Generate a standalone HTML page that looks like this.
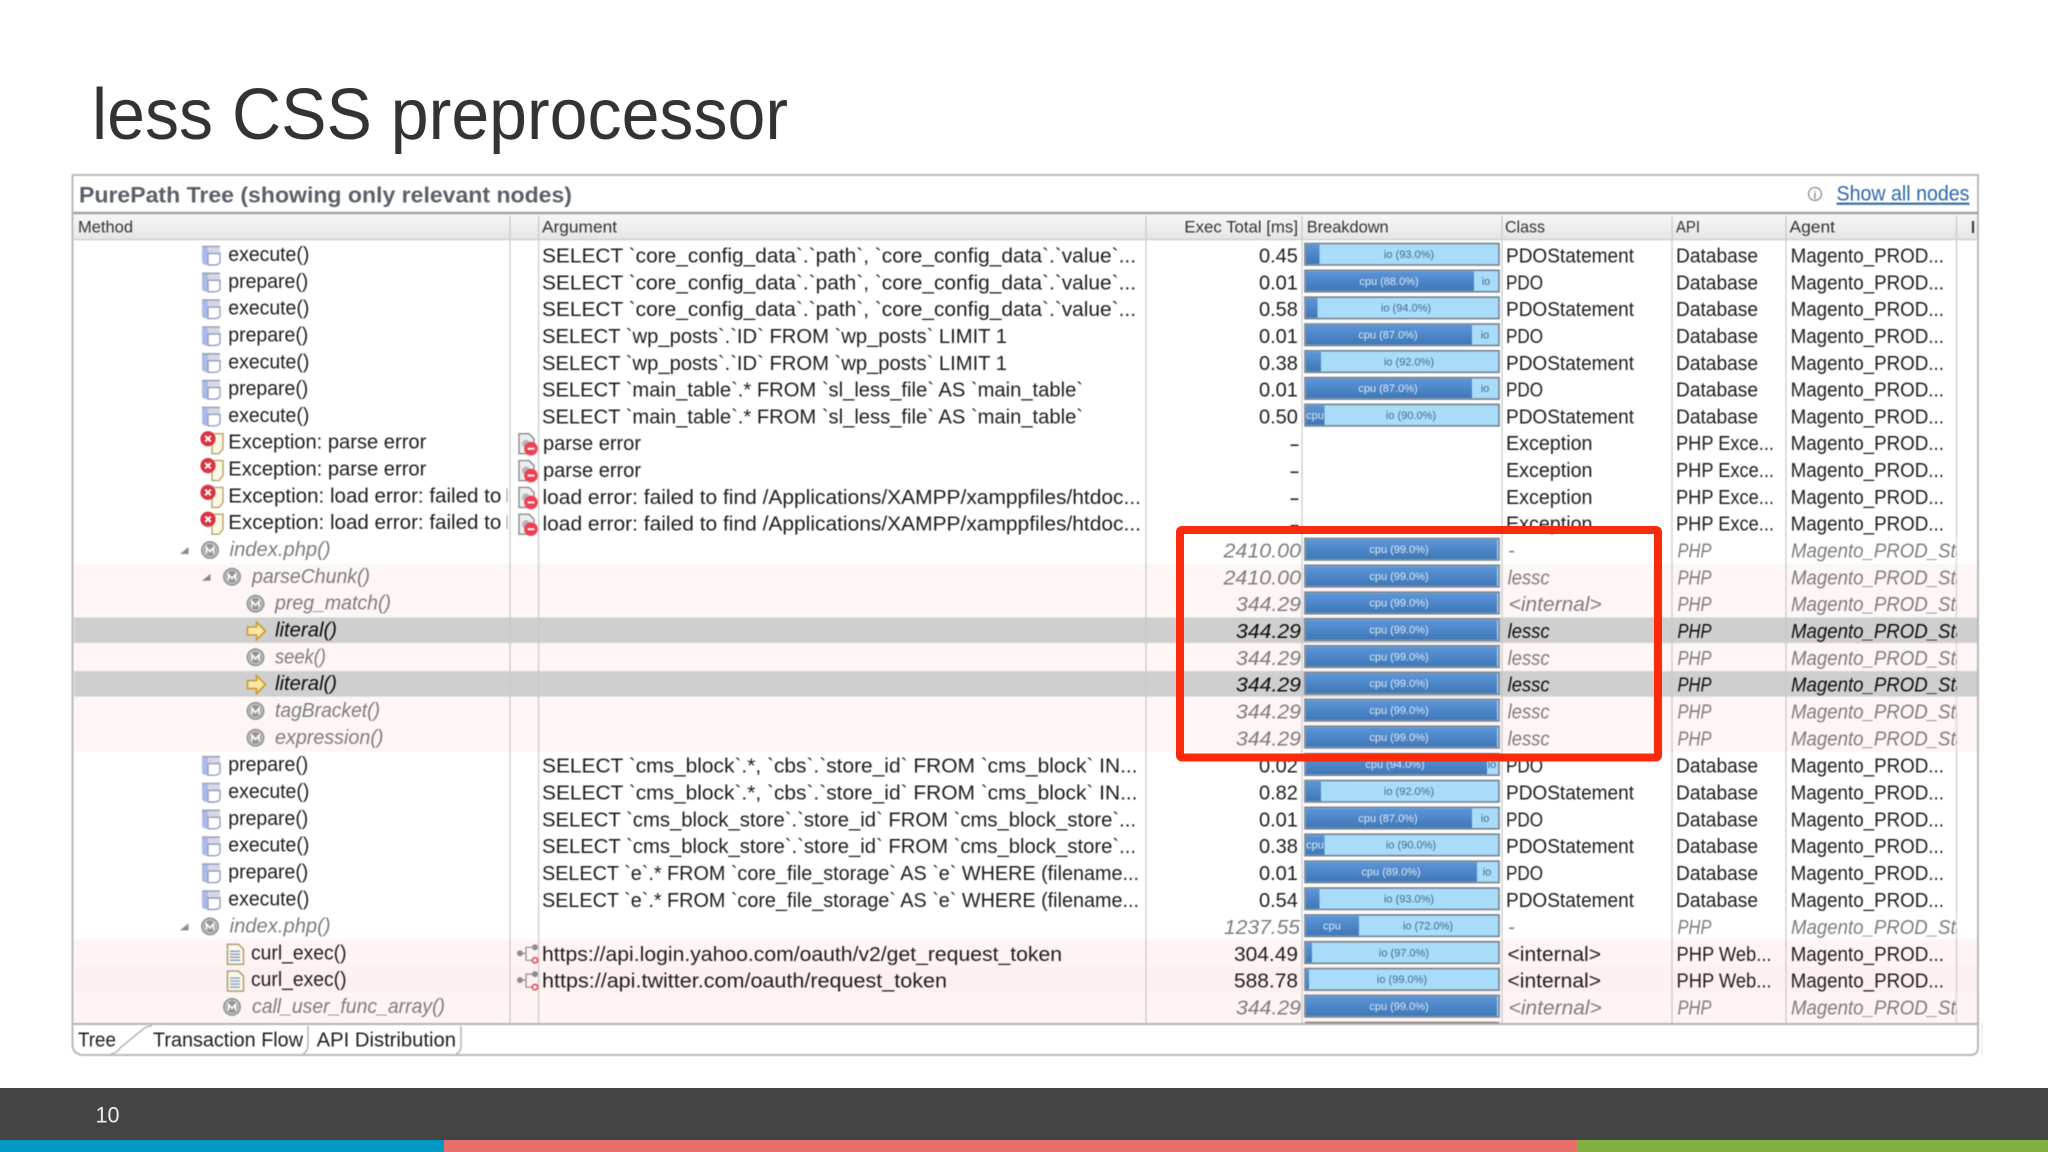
<!DOCTYPE html>
<html><head><meta charset="utf-8"><title>less CSS preprocessor</title>
<style>
html,body{margin:0;padding:0;background:#fff;width:2048px;height:1152px;overflow:hidden}
svg{display:block;position:absolute;left:0;top:0}
text{font-family:"Liberation Sans",sans-serif;font-size:20px;fill:#1c1c1c;white-space:pre}
.hd{font-size:17px;fill:#333}
.i{font-style:italic;fill:#7c7c7c}
.k{font-style:italic;fill:#0c0c0c}
.ld{font-size:11px;fill:#dbe9f8;text-anchor:middle}
.ll{font-size:11px;fill:#3f6c94;text-anchor:middle}
.bl{fill:#a9dcf8;stroke:#74818e;stroke-width:1.6}
.bd{fill:url(#dk)}
.tbl{filter:blur(.4px)}
</style></head><body>
<svg width="2048" height="1152" viewBox="0 0 2048 1152" xmlns="http://www.w3.org/2000/svg">
<defs>
<linearGradient id="dk" x1="0" y1="0" x2="0" y2="1"><stop offset="0" stop-color="#5c96da"/><stop offset="1" stop-color="#3f77b6"/></linearGradient>
<linearGradient id="hg" x1="0" y1="0" x2="0" y2="1"><stop offset="0" stop-color="#f7f7f7"/><stop offset="1" stop-color="#e6e6e6"/></linearGradient>
<g id="db"><path d="M202 4.500h6v18l-3 .5-3-2z" fill="#aeb9e8"/><path d="M208 4.500h12v7h-12z" fill="#d6d9e4"/><path d="M208 11.500h12v8.500q-1 3-6 3h-6z" fill="#fff" stroke="#8f9dc0" stroke-width="1.400"/><path d="M202 4.500h18" stroke="#98a3bd" stroke-width="1.600"/></g>
<g id="ex"><path d="M212 4h11v15l-4 5h-7z" fill="#fdf8e4" stroke="#b3a468" stroke-width="1.400"/><circle cx="208" cy="9" r="7.600" fill="#d9333f"/><path d="M205.200 6.200l5.600 5.600M210.800 6.200l-5.600 5.600" stroke="#fff" stroke-width="2"/></g>
<g id="ae"><path d="M519 4h10l5 5v15h-15z" fill="#eee" stroke="#8a8a8a" stroke-width="1.400"/><circle cx="526" cy="14" r="4" fill="#b5b5b5"/><circle cx="531" cy="19" r="6.800" fill="#ef3f55"/><path d="M527.500 19h7" stroke="#fff" stroke-width="2"/></g>
<g id="mi"><circle cx="0" cy="0" r="9" fill="#969696"/><circle cx="0" cy="0" r="6.600" fill="none" stroke="#d4d4d4" stroke-width="1"/><path d="M-3.600 3.500v-6l3.600 4 3.600-4v6" fill="none" stroke="#fff" stroke-width="1.700"/></g>
<g id="ar"><path d="M247.500 9.500h9v-5l9 9-9 9v-5h-9z" fill="#fbe6a6" stroke="#c79a2e" stroke-width="1.600"/></g>
<g id="fi"><path d="M227.500 4h11l5 5v15h-16z" fill="#fbf6e8" stroke="#a5996c" stroke-width="1.400"/><path d="M230 11h10M230 14h10M230 17h10M230 20h10" stroke="#7e9ac8" stroke-width="1.300"/></g>
<g id="ln"><path d="M520 13h6M526 13v-6h9M526 13v7h6" fill="none" stroke="#8f8f8f" stroke-width="1.200"/><circle cx="520" cy="13" r="3" fill="#8d8d8d"/><circle cx="535" cy="7" r="3" fill="#8d8d8d"/><circle cx="535" cy="20" r="2.600" fill="#fff" stroke="#e04a5c" stroke-width="1.700"/></g>
</defs>

<text x="92" y="139" style="font-size:72px;fill:#333" textLength="696" lengthAdjust="spacingAndGlyphs">less CSS preprocessor</text>

<g class="tbl">
<!-- row backgrounds -->
<rect x="74" y="563.800" width="1904" height="187.800" fill="#fef5f5"/>
<rect x="74" y="939.300" width="1904" height="84" fill="#fef4f4"/>
<rect x="74" y="966.100" width="1904" height="26.800" fill="#fdf0f0"/>
<rect x="74" y="617.500" width="1904" height="25.500" fill="#cfcfcf"/>
<rect x="74" y="671.100" width="1904" height="25.500" fill="#cfcfcf"/>

<!-- panel -->
<rect x="74" y="214" width="1904" height="25" fill="url(#hg)"/>
<path d="M72.500 1044V175H1978V1047q0 8-8 8H84q-11.500 0-11.500-11" fill="none" stroke="#b9b9b9" stroke-width="2"/>
<path d="M73 213H1978" stroke="#a3a3a3" stroke-width="2.600"/>
<path d="M73 239.500H1978" stroke="#cfcfcf" stroke-width="1.600"/>
<path d="M73 1024H1978" stroke="#b4b4b4" stroke-width="2"/>
<path d="M1305 1022.500H1499" stroke="#8a7f7f" stroke-width="1.500"/>
<path d="M1982 1022V1057" stroke="#e3e3e3" stroke-width="1"/>
<path d="M510 216V1023M538.600 216V1023M1146 216V1023M1302 216V1023M1502 216V1023M1672 216V1023M1786 216V1023M1956.500 216V1023" stroke="#c8c8c8" stroke-width="1.200" fill="none"/>
<path d="M111 1054q6-1 9-6l22-18q4-4 10-4M308 1026v20q-1 6-5 8M461 1026v20q0 6-5 8" fill="none" stroke="#b4b4b4" stroke-width="1.500"/>

<!-- title bar -->
<text x="79" y="202.700" style="font-size:22px;font-weight:bold;fill:#5a6068" textLength="493" lengthAdjust="spacingAndGlyphs">PurePath Tree (showing only relevant nodes)</text>
<circle cx="1815" cy="194" r="6.500" fill="#fff" stroke="#8b8b8b" stroke-width="1.300"/>
<text x="1813.500" y="199" style="font-size:12px;fill:#666">i</text>
<text x="1836.500" y="200.700" style="font-size:21px;fill:#2b66ab;text-decoration:underline" textLength="133" lengthAdjust="spacingAndGlyphs">Show all nodes</text>

<!-- header -->
<text class="hd" x="78" y="232.700" textLength="55" lengthAdjust="spacingAndGlyphs">Method</text>
<text class="hd" x="542" y="232.700" textLength="75" lengthAdjust="spacingAndGlyphs">Argument</text>
<text class="hd" x="1184.400" y="232.700" textLength="113.600" lengthAdjust="spacingAndGlyphs">Exec Total [ms]</text>
<text class="hd" x="1306.700" y="232.700" textLength="82" lengthAdjust="spacingAndGlyphs">Breakdown</text>
<text class="hd" x="1505" y="232.700" textLength="40" lengthAdjust="spacingAndGlyphs">Class</text>
<text class="hd" x="1676" y="232.700" textLength="24" lengthAdjust="spacingAndGlyphs">API</text>
<text class="hd" x="1789.500" y="232.700" textLength="45.500" lengthAdjust="spacingAndGlyphs">Agent</text>
<rect x="1972" y="221" width="2" height="12" fill="#333"/>

<!-- row 0 -->
<g transform="translate(0,242)"><use href="#db"/><text x="228.300" y="19" textLength="81" lengthAdjust="spacingAndGlyphs">execute()</text>
<text x="542" y="20.500" textLength="594" lengthAdjust="spacingAndGlyphs">SELECT `core_config_data`.`path`, `core_config_data`.`value`...</text>
<text x="1259" y="20.500">0.45</text>
<rect class="bl" x="1305" y="1.500" width="194" height="21.500"/><rect class="bd" x="1306" y="2.500" width="13.500" height="19.500"/><text class="ll" x="1409" y="16">io (93.0%)</text>
<text x="1506" y="20.500" textLength="128" lengthAdjust="spacingAndGlyphs">PDOStatement</text><text x="1676" y="20.500" textLength="82" lengthAdjust="spacingAndGlyphs">Database</text><text x="1790.600" y="20.500" textLength="153.400" lengthAdjust="spacingAndGlyphs">Magento_PROD...</text></g>
<!-- row 1 -->
<g transform="translate(0,268.800)"><use href="#db"/><text x="228.300" y="19" textLength="80" lengthAdjust="spacingAndGlyphs">prepare()</text>
<text x="542" y="20.500" textLength="594" lengthAdjust="spacingAndGlyphs">SELECT `core_config_data`.`path`, `core_config_data`.`value`...</text>
<text x="1259" y="20.500">0.01</text>
<rect class="bl" x="1305" y="1.500" width="194" height="21.500"/><rect class="bd" x="1306" y="2.500" width="168" height="19.500"/><text class="ld" x="1389" y="16">cpu (88.0%)</text><text class="ll" x="1486" y="16">io</text>
<text x="1506" y="20.500" textLength="37" lengthAdjust="spacingAndGlyphs">PDO</text><text x="1676" y="20.500" textLength="82" lengthAdjust="spacingAndGlyphs">Database</text><text x="1790.600" y="20.500" textLength="153.400" lengthAdjust="spacingAndGlyphs">Magento_PROD...</text></g>
<!-- row 2 -->
<g transform="translate(0,295.600)"><use href="#db"/><text x="228.300" y="19" textLength="81" lengthAdjust="spacingAndGlyphs">execute()</text>
<text x="542" y="20.500" textLength="594" lengthAdjust="spacingAndGlyphs">SELECT `core_config_data`.`path`, `core_config_data`.`value`...</text>
<text x="1259" y="20.500">0.58</text>
<rect class="bl" x="1305" y="1.500" width="194" height="21.500"/><rect class="bd" x="1306" y="2.500" width="11.500" height="19.500"/><text class="ll" x="1406" y="16">io (94.0%)</text>
<text x="1506" y="20.500" textLength="128" lengthAdjust="spacingAndGlyphs">PDOStatement</text><text x="1676" y="20.500" textLength="82" lengthAdjust="spacingAndGlyphs">Database</text><text x="1790.600" y="20.500" textLength="153.400" lengthAdjust="spacingAndGlyphs">Magento_PROD...</text></g>
<!-- row 3 -->
<g transform="translate(0,322.500)"><use href="#db"/><text x="228.300" y="19" textLength="80" lengthAdjust="spacingAndGlyphs">prepare()</text>
<text x="542" y="20.500" textLength="465" lengthAdjust="spacingAndGlyphs">SELECT `wp_posts`.`ID` FROM `wp_posts` LIMIT 1</text>
<text x="1259" y="20.500">0.01</text>
<rect class="bl" x="1305" y="1.500" width="194" height="21.500"/><rect class="bd" x="1306" y="2.500" width="166" height="19.500"/><text class="ld" x="1388" y="16">cpu (87.0%)</text><text class="ll" x="1485" y="16">io</text>
<text x="1506" y="20.500" textLength="37" lengthAdjust="spacingAndGlyphs">PDO</text><text x="1676" y="20.500" textLength="82" lengthAdjust="spacingAndGlyphs">Database</text><text x="1790.600" y="20.500" textLength="153.400" lengthAdjust="spacingAndGlyphs">Magento_PROD...</text></g>
<!-- row 4 -->
<g transform="translate(0,349.300)"><use href="#db"/><text x="228.300" y="19" textLength="81" lengthAdjust="spacingAndGlyphs">execute()</text>
<text x="542" y="20.500" textLength="465" lengthAdjust="spacingAndGlyphs">SELECT `wp_posts`.`ID` FROM `wp_posts` LIMIT 1</text>
<text x="1259" y="20.500">0.38</text>
<rect class="bl" x="1305" y="1.500" width="194" height="21.500"/><rect class="bd" x="1306" y="2.500" width="15" height="19.500"/><text class="ll" x="1409" y="16">io (92.0%)</text>
<text x="1506" y="20.500" textLength="128" lengthAdjust="spacingAndGlyphs">PDOStatement</text><text x="1676" y="20.500" textLength="82" lengthAdjust="spacingAndGlyphs">Database</text><text x="1790.600" y="20.500" textLength="153.400" lengthAdjust="spacingAndGlyphs">Magento_PROD...</text></g>
<!-- row 5 -->
<g transform="translate(0,376.100)"><use href="#db"/><text x="228.300" y="19" textLength="80" lengthAdjust="spacingAndGlyphs">prepare()</text>
<text x="542" y="20.500" textLength="541" lengthAdjust="spacingAndGlyphs">SELECT `main_table`.* FROM `sl_less_file` AS `main_table`</text>
<text x="1259" y="20.500">0.01</text>
<rect class="bl" x="1305" y="1.500" width="194" height="21.500"/><rect class="bd" x="1306" y="2.500" width="166" height="19.500"/><text class="ld" x="1388" y="16">cpu (87.0%)</text><text class="ll" x="1485" y="16">io</text>
<text x="1506" y="20.500" textLength="37" lengthAdjust="spacingAndGlyphs">PDO</text><text x="1676" y="20.500" textLength="82" lengthAdjust="spacingAndGlyphs">Database</text><text x="1790.600" y="20.500" textLength="153.400" lengthAdjust="spacingAndGlyphs">Magento_PROD...</text></g>
<!-- row 6 -->
<g transform="translate(0,402.900)"><use href="#db"/><text x="228.300" y="19" textLength="81" lengthAdjust="spacingAndGlyphs">execute()</text>
<text x="542" y="20.500" textLength="541" lengthAdjust="spacingAndGlyphs">SELECT `main_table`.* FROM `sl_less_file` AS `main_table`</text>
<text x="1259" y="20.500">0.50</text>
<rect class="bl" x="1305" y="1.500" width="194" height="21.500"/><rect class="bd" x="1306" y="2.500" width="18.500" height="19.500"/><text class="ld" x="1315" y="16">cpu</text><text class="ll" x="1411" y="16">io (90.0%)</text>
<text x="1506" y="20.500" textLength="128" lengthAdjust="spacingAndGlyphs">PDOStatement</text><text x="1676" y="20.500" textLength="82" lengthAdjust="spacingAndGlyphs">Database</text><text x="1790.600" y="20.500" textLength="153.400" lengthAdjust="spacingAndGlyphs">Magento_PROD...</text></g>
<!-- row 7 -->
<g transform="translate(0,429.700)"><use href="#ex"/><text x="228.300" y="19" textLength="198" lengthAdjust="spacingAndGlyphs">Exception: parse error</text><use href="#ae"/>
<text x="543" y="20.500" textLength="98" lengthAdjust="spacingAndGlyphs">parse error</text>
<text x="1290" y="20" style="font-size:16px;font-weight:bold">–</text>
<text x="1506" y="20.500" textLength="86.500" lengthAdjust="spacingAndGlyphs">Exception</text><text x="1676" y="20.500" textLength="98" lengthAdjust="spacingAndGlyphs">PHP Exce...</text><text x="1790.600" y="20.500" textLength="153.400" lengthAdjust="spacingAndGlyphs">Magento_PROD...</text></g>
<!-- row 8 -->
<g transform="translate(0,456.600)"><use href="#ex"/><text x="228.300" y="19" textLength="198" lengthAdjust="spacingAndGlyphs">Exception: parse error</text><use href="#ae"/>
<text x="543" y="20.500" textLength="98" lengthAdjust="spacingAndGlyphs">parse error</text>
<text x="1290" y="20" style="font-size:16px;font-weight:bold">–</text>
<text x="1506" y="20.500" textLength="86.500" lengthAdjust="spacingAndGlyphs">Exception</text><text x="1676" y="20.500" textLength="98" lengthAdjust="spacingAndGlyphs">PHP Exce...</text><text x="1790.600" y="20.500" textLength="153.400" lengthAdjust="spacingAndGlyphs">Magento_PROD...</text></g>
<!-- row 9 -->
<g transform="translate(0,483.400)"><use href="#ex"/><text x="228.300" y="19" textLength="273" lengthAdjust="spacingAndGlyphs">Exception: load error: failed to</text><path d="M507 5v14" stroke="#999" stroke-width="1"/><use href="#ae"/>
<text x="542.500" y="20.500" textLength="598.500" lengthAdjust="spacingAndGlyphs">load error: failed to find /Applications/XAMPP/xamppfiles/htdoc...</text>
<text x="1290" y="20" style="font-size:16px;font-weight:bold">–</text>
<text x="1506" y="20.500" textLength="86.500" lengthAdjust="spacingAndGlyphs">Exception</text><text x="1676" y="20.500" textLength="98" lengthAdjust="spacingAndGlyphs">PHP Exce...</text><text x="1790.600" y="20.500" textLength="153.400" lengthAdjust="spacingAndGlyphs">Magento_PROD...</text></g>
<!-- row 10 -->
<g transform="translate(0,510.200)"><use href="#ex"/><text x="228.300" y="19" textLength="273" lengthAdjust="spacingAndGlyphs">Exception: load error: failed to</text><path d="M507 5v14" stroke="#999" stroke-width="1"/><use href="#ae"/>
<text x="542.500" y="20.500" textLength="598.500" lengthAdjust="spacingAndGlyphs">load error: failed to find /Applications/XAMPP/xamppfiles/htdoc...</text>
<text x="1290" y="20" style="font-size:16px;font-weight:bold">–</text>
<text x="1506" y="20.500" textLength="86.500" lengthAdjust="spacingAndGlyphs">Exception</text><text x="1676" y="20.500" textLength="98" lengthAdjust="spacingAndGlyphs">PHP Exce...</text><text x="1790.600" y="20.500" textLength="153.400" lengthAdjust="spacingAndGlyphs">Magento_PROD...</text></g>
<!-- row 11 -->
<g transform="translate(0,537)"><path d="M180 17l8.500-7v7z" fill="#8a8a8a"/><use href="#mi" x="210" y="13"/><text class="i" x="229.600" y="19" textLength="101" lengthAdjust="spacingAndGlyphs">index.php()</text>
<text class="i" x="1223.500" y="20.500" textLength="77.500" lengthAdjust="spacingAndGlyphs">2410.00</text>
<rect class="bl" x="1305" y="1.500" width="194" height="21.500"/><rect class="bd" x="1306" y="2.500" width="191" height="19.500"/><text class="ld" x="1399" y="16">cpu (99.0%)</text>
<text class="i" x="1508" y="20">-</text><text class="i" x="1677.500" y="20.500" textLength="34" lengthAdjust="spacingAndGlyphs">PHP</text><text class="i" x="1791" y="20.500" textLength="175" lengthAdjust="spacingAndGlyphs">Magento_PROD_Sta</text></g>
<!-- row 12 -->
<g transform="translate(0,563.800)"><path d="M202 17l8.500-7v7z" fill="#8a8a8a"/><use href="#mi" x="232" y="13"/><text class="i" x="252" y="19" textLength="118" lengthAdjust="spacingAndGlyphs">parseChunk()</text>
<text class="i" x="1223.500" y="20.500" textLength="77.500" lengthAdjust="spacingAndGlyphs">2410.00</text>
<rect class="bl" x="1305" y="1.500" width="194" height="21.500"/><rect class="bd" x="1306" y="2.500" width="191" height="19.500"/><text class="ld" x="1399" y="16">cpu (99.0%)</text>
<text class="i" x="1507.600" y="20.500" textLength="42" lengthAdjust="spacingAndGlyphs">lessc</text><text class="i" x="1677.500" y="20.500" textLength="34" lengthAdjust="spacingAndGlyphs">PHP</text><text class="i" x="1791" y="20.500" textLength="175" lengthAdjust="spacingAndGlyphs">Magento_PROD_Sta</text></g>
<!-- row 13 -->
<g transform="translate(0,590.700)"><use href="#mi" x="255.500" y="13"/><text class="i" x="275" y="19" textLength="116" lengthAdjust="spacingAndGlyphs">preg_match()</text>
<text class="i" x="1236" y="20.500" textLength="65" lengthAdjust="spacingAndGlyphs">344.29</text>
<rect class="bl" x="1305" y="1.500" width="194" height="21.500"/><rect class="bd" x="1306" y="2.500" width="191" height="19.500"/><text class="ld" x="1399" y="16">cpu (99.0%)</text>
<text class="i" x="1508.700" y="20.500" textLength="93" lengthAdjust="spacingAndGlyphs">&lt;internal&gt;</text><text class="i" x="1677.500" y="20.500" textLength="34" lengthAdjust="spacingAndGlyphs">PHP</text><text class="i" x="1791" y="20.500" textLength="175" lengthAdjust="spacingAndGlyphs">Magento_PROD_Sta</text></g>
<!-- row 14 -->
<g transform="translate(0,617.500)"><use href="#ar"/><text class="k" x="275" y="19" textLength="62" lengthAdjust="spacingAndGlyphs">literal()</text>
<text class="k" x="1236" y="20.500" textLength="65" lengthAdjust="spacingAndGlyphs">344.29</text>
<rect class="bl" x="1305" y="1.500" width="194" height="21.500"/><rect class="bd" x="1306" y="2.500" width="191" height="19.500"/><text class="ld" x="1399" y="16">cpu (99.0%)</text>
<text class="k" x="1507.600" y="20.500" textLength="42" lengthAdjust="spacingAndGlyphs">lessc</text><text class="k" x="1677.500" y="20.500" textLength="34" lengthAdjust="spacingAndGlyphs">PHP</text><text class="k" x="1791" y="20.500" textLength="175" lengthAdjust="spacingAndGlyphs">Magento_PROD_Sta</text></g>
<!-- row 15 -->
<g transform="translate(0,644.300)"><use href="#mi" x="255.500" y="13"/><text class="i" x="275" y="19" textLength="51" lengthAdjust="spacingAndGlyphs">seek()</text>
<text class="i" x="1236" y="20.500" textLength="65" lengthAdjust="spacingAndGlyphs">344.29</text>
<rect class="bl" x="1305" y="1.500" width="194" height="21.500"/><rect class="bd" x="1306" y="2.500" width="191" height="19.500"/><text class="ld" x="1399" y="16">cpu (99.0%)</text>
<text class="i" x="1507.600" y="20.500" textLength="42" lengthAdjust="spacingAndGlyphs">lessc</text><text class="i" x="1677.500" y="20.500" textLength="34" lengthAdjust="spacingAndGlyphs">PHP</text><text class="i" x="1791" y="20.500" textLength="175" lengthAdjust="spacingAndGlyphs">Magento_PROD_Sta</text></g>
<!-- row 16 -->
<g transform="translate(0,671.100)"><use href="#ar"/><text class="k" x="275" y="19" textLength="62" lengthAdjust="spacingAndGlyphs">literal()</text>
<text class="k" x="1236" y="20.500" textLength="65" lengthAdjust="spacingAndGlyphs">344.29</text>
<rect class="bl" x="1305" y="1.500" width="194" height="21.500"/><rect class="bd" x="1306" y="2.500" width="191" height="19.500"/><text class="ld" x="1399" y="16">cpu (99.0%)</text>
<text class="k" x="1507.600" y="20.500" textLength="42" lengthAdjust="spacingAndGlyphs">lessc</text><text class="k" x="1677.500" y="20.500" textLength="34" lengthAdjust="spacingAndGlyphs">PHP</text><text class="k" x="1791" y="20.500" textLength="175" lengthAdjust="spacingAndGlyphs">Magento_PROD_Sta</text></g>
<!-- row 17 -->
<g transform="translate(0,697.900)"><use href="#mi" x="255.500" y="13"/><text class="i" x="275" y="19" textLength="105" lengthAdjust="spacingAndGlyphs">tagBracket()</text>
<text class="i" x="1236" y="20.500" textLength="65" lengthAdjust="spacingAndGlyphs">344.29</text>
<rect class="bl" x="1305" y="1.500" width="194" height="21.500"/><rect class="bd" x="1306" y="2.500" width="191" height="19.500"/><text class="ld" x="1399" y="16">cpu (99.0%)</text>
<text class="i" x="1507.600" y="20.500" textLength="42" lengthAdjust="spacingAndGlyphs">lessc</text><text class="i" x="1677.500" y="20.500" textLength="34" lengthAdjust="spacingAndGlyphs">PHP</text><text class="i" x="1791" y="20.500" textLength="175" lengthAdjust="spacingAndGlyphs">Magento_PROD_Sta</text></g>
<!-- row 18 -->
<g transform="translate(0,724.800)"><use href="#mi" x="255.500" y="13"/><text class="i" x="275" y="19" textLength="108.500" lengthAdjust="spacingAndGlyphs">expression()</text>
<text class="i" x="1236" y="20.500" textLength="65" lengthAdjust="spacingAndGlyphs">344.29</text>
<rect class="bl" x="1305" y="1.500" width="194" height="21.500"/><rect class="bd" x="1306" y="2.500" width="191" height="19.500"/><text class="ld" x="1399" y="16">cpu (99.0%)</text>
<text class="i" x="1507.600" y="20.500" textLength="42" lengthAdjust="spacingAndGlyphs">lessc</text><text class="i" x="1677.500" y="20.500" textLength="34" lengthAdjust="spacingAndGlyphs">PHP</text><text class="i" x="1791" y="20.500" textLength="175" lengthAdjust="spacingAndGlyphs">Magento_PROD_Sta</text></g>
<!-- row 19 -->
<g transform="translate(0,752.200)"><use href="#db"/><text x="228.300" y="19" textLength="80" lengthAdjust="spacingAndGlyphs">prepare()</text>
<text x="542" y="20.500" textLength="595.500" lengthAdjust="spacingAndGlyphs">SELECT `cms_block`.*, `cbs`.`store_id` FROM `cms_block` IN...</text>
<text x="1259" y="20.500">0.02</text>
<rect class="bl" x="1305" y="1.500" width="194" height="21.500"/><rect class="bd" x="1306" y="2.500" width="181" height="19.500"/><text class="ld" x="1395" y="16">cpu (94.0%)</text><text class="ll" x="1492" y="16">io</text>
<text x="1506" y="20.500" textLength="37" lengthAdjust="spacingAndGlyphs">PDO</text><text x="1676" y="20.500" textLength="82" lengthAdjust="spacingAndGlyphs">Database</text><text x="1790.600" y="20.500" textLength="153.400" lengthAdjust="spacingAndGlyphs">Magento_PROD...</text></g>
<!-- row 20 -->
<g transform="translate(0,779)"><use href="#db"/><text x="228.300" y="19" textLength="81" lengthAdjust="spacingAndGlyphs">execute()</text>
<text x="542" y="20.500" textLength="595.500" lengthAdjust="spacingAndGlyphs">SELECT `cms_block`.*, `cbs`.`store_id` FROM `cms_block` IN...</text>
<text x="1259" y="20.500">0.82</text>
<rect class="bl" x="1305" y="1.500" width="194" height="21.500"/><rect class="bd" x="1306" y="2.500" width="15" height="19.500"/><text class="ll" x="1409" y="16">io (92.0%)</text>
<text x="1506" y="20.500" textLength="128" lengthAdjust="spacingAndGlyphs">PDOStatement</text><text x="1676" y="20.500" textLength="82" lengthAdjust="spacingAndGlyphs">Database</text><text x="1790.600" y="20.500" textLength="153.400" lengthAdjust="spacingAndGlyphs">Magento_PROD...</text></g>
<!-- row 21 -->
<g transform="translate(0,805.800)"><use href="#db"/><text x="228.300" y="19" textLength="80" lengthAdjust="spacingAndGlyphs">prepare()</text>
<text x="542" y="20.500" textLength="594" lengthAdjust="spacingAndGlyphs">SELECT `cms_block_store`.`store_id` FROM `cms_block_store`...</text>
<text x="1259" y="20.500">0.01</text>
<rect class="bl" x="1305" y="1.500" width="194" height="21.500"/><rect class="bd" x="1306" y="2.500" width="166" height="19.500"/><text class="ld" x="1388" y="16">cpu (87.0%)</text><text class="ll" x="1485" y="16">io</text>
<text x="1506" y="20.500" textLength="37" lengthAdjust="spacingAndGlyphs">PDO</text><text x="1676" y="20.500" textLength="82" lengthAdjust="spacingAndGlyphs">Database</text><text x="1790.600" y="20.500" textLength="153.400" lengthAdjust="spacingAndGlyphs">Magento_PROD...</text></g>
<!-- row 22 -->
<g transform="translate(0,832.700)"><use href="#db"/><text x="228.300" y="19" textLength="81" lengthAdjust="spacingAndGlyphs">execute()</text>
<text x="542" y="20.500" textLength="594" lengthAdjust="spacingAndGlyphs">SELECT `cms_block_store`.`store_id` FROM `cms_block_store`...</text>
<text x="1259" y="20.500">0.38</text>
<rect class="bl" x="1305" y="1.500" width="194" height="21.500"/><rect class="bd" x="1306" y="2.500" width="18.500" height="19.500"/><text class="ld" x="1315" y="16">cpu</text><text class="ll" x="1411" y="16">io (90.0%)</text>
<text x="1506" y="20.500" textLength="128" lengthAdjust="spacingAndGlyphs">PDOStatement</text><text x="1676" y="20.500" textLength="82" lengthAdjust="spacingAndGlyphs">Database</text><text x="1790.600" y="20.500" textLength="153.400" lengthAdjust="spacingAndGlyphs">Magento_PROD...</text></g>
<!-- row 23 -->
<g transform="translate(0,859.600)"><use href="#db"/><text x="228.300" y="19" textLength="80" lengthAdjust="spacingAndGlyphs">prepare()</text>
<text x="542" y="20.500" textLength="597" lengthAdjust="spacingAndGlyphs">SELECT `e`.* FROM `core_file_storage` AS `e` WHERE (filename...</text>
<text x="1259" y="20.500">0.01</text>
<rect class="bl" x="1305" y="1.500" width="194" height="21.500"/><rect class="bd" x="1306" y="2.500" width="171" height="19.500"/><text class="ld" x="1391" y="16">cpu (89.0%)</text><text class="ll" x="1487" y="16">io</text>
<text x="1506" y="20.500" textLength="37" lengthAdjust="spacingAndGlyphs">PDO</text><text x="1676" y="20.500" textLength="82" lengthAdjust="spacingAndGlyphs">Database</text><text x="1790.600" y="20.500" textLength="153.400" lengthAdjust="spacingAndGlyphs">Magento_PROD...</text></g>
<!-- row 24 -->
<g transform="translate(0,886.500)"><use href="#db"/><text x="228.300" y="19" textLength="81" lengthAdjust="spacingAndGlyphs">execute()</text>
<text x="542" y="20.500" textLength="597" lengthAdjust="spacingAndGlyphs">SELECT `e`.* FROM `core_file_storage` AS `e` WHERE (filename...</text>
<text x="1259" y="20.500">0.54</text>
<rect class="bl" x="1305" y="1.500" width="194" height="21.500"/><rect class="bd" x="1306" y="2.500" width="13.500" height="19.500"/><text class="ll" x="1409" y="16">io (93.0%)</text>
<text x="1506" y="20.500" textLength="128" lengthAdjust="spacingAndGlyphs">PDOStatement</text><text x="1676" y="20.500" textLength="82" lengthAdjust="spacingAndGlyphs">Database</text><text x="1790.600" y="20.500" textLength="153.400" lengthAdjust="spacingAndGlyphs">Magento_PROD...</text></g>
<!-- row 25 -->
<g transform="translate(0,913.400)"><path d="M180 17l8.500-7v7z" fill="#8a8a8a"/><use href="#mi" x="210" y="13"/><text class="i" x="229.600" y="19" textLength="101" lengthAdjust="spacingAndGlyphs">index.php()</text>
<text class="i" x="1224" y="20.500" textLength="76" lengthAdjust="spacingAndGlyphs">1237.55</text>
<rect class="bl" x="1305" y="1.500" width="194" height="21.500"/><rect class="bd" x="1306" y="2.500" width="53" height="19.500"/><text class="ld" x="1332" y="16">cpu</text><text class="ll" x="1428" y="16">io (72.0%)</text>
<text class="i" x="1508" y="20">-</text><text class="i" x="1677.500" y="20.500" textLength="34" lengthAdjust="spacingAndGlyphs">PHP</text><text class="i" x="1791" y="20.500" textLength="175" lengthAdjust="spacingAndGlyphs">Magento_PROD_Sta</text></g>
<!-- row 26 -->
<g transform="translate(0,940.300)"><use href="#fi"/><text x="251" y="19" textLength="95.500" lengthAdjust="spacingAndGlyphs">curl_exec()</text><use href="#ln"/>
<text x="542" y="20.500" textLength="520" lengthAdjust="spacingAndGlyphs">https://api.login.yahoo.com/oauth/v2/get_request_token</text>
<text x="1234" y="20.500" textLength="64" lengthAdjust="spacingAndGlyphs">304.49</text>
<rect class="bl" x="1305" y="1.500" width="194" height="21.500"/><rect class="bd" x="1306" y="2.500" width="6" height="19.500"/><text class="ll" x="1404" y="16">io (97.0%)</text>
<text x="1507.500" y="20.500" textLength="93.500" lengthAdjust="spacingAndGlyphs">&lt;internal&gt;</text><text x="1676.500" y="20.500" textLength="95" lengthAdjust="spacingAndGlyphs">PHP Web...</text><text x="1790.600" y="20.500" textLength="153.400" lengthAdjust="spacingAndGlyphs">Magento_PROD...</text></g>
<!-- row 27 -->
<g transform="translate(0,967.100)"><use href="#fi"/><text x="251" y="19" textLength="95.500" lengthAdjust="spacingAndGlyphs">curl_exec()</text><use href="#ln"/>
<text x="542" y="20.500" textLength="405" lengthAdjust="spacingAndGlyphs">https://api.twitter.com/oauth/request_token</text>
<text x="1234" y="20.500" textLength="64" lengthAdjust="spacingAndGlyphs">588.78</text>
<rect class="bl" x="1305" y="1.500" width="194" height="21.500"/><rect class="bd" x="1306" y="2.500" width="3" height="19.500"/><text class="ll" x="1402" y="16">io (99.0%)</text>
<text x="1507.500" y="20.500" textLength="93.500" lengthAdjust="spacingAndGlyphs">&lt;internal&gt;</text><text x="1676.500" y="20.500" textLength="95" lengthAdjust="spacingAndGlyphs">PHP Web...</text><text x="1790.600" y="20.500" textLength="153.400" lengthAdjust="spacingAndGlyphs">Magento_PROD...</text></g>
<!-- row 28 -->
<g transform="translate(0,993.900)"><use href="#mi" x="232" y="13"/><text class="i" x="252" y="19" textLength="193" lengthAdjust="spacingAndGlyphs">call_user_func_array()</text>
<text class="i" x="1236" y="20.500" textLength="65" lengthAdjust="spacingAndGlyphs">344.29</text>
<rect class="bl" x="1305" y="1.500" width="194" height="21.500"/><rect class="bd" x="1306" y="2.500" width="191" height="19.500"/><text class="ld" x="1399" y="16">cpu (99.0%)</text>
<text class="i" x="1508.700" y="20.500" textLength="93" lengthAdjust="spacingAndGlyphs">&lt;internal&gt;</text><text class="i" x="1677.500" y="20.500" textLength="34" lengthAdjust="spacingAndGlyphs">PHP</text><text class="i" x="1791" y="20.500" textLength="175" lengthAdjust="spacingAndGlyphs">Magento_PROD_Sta</text></g>

<!-- covers clipped agent overflow -->
<rect x="1956.800" y="537" width="20" height="26.800" fill="#fff"/>
<rect x="1956.800" y="563.800" width="20" height="53.700" fill="#fef5f5"/>
<rect x="1956.800" y="617.500" width="20" height="25.500" fill="#cfcfcf"/>
<rect x="1956.800" y="643" width="20" height="28.100" fill="#fef5f5"/>
<rect x="1956.800" y="671.100" width="20" height="25.500" fill="#cfcfcf"/>
<rect x="1956.800" y="696.600" width="20" height="55" fill="#fef5f5"/>
<rect x="1956.800" y="912.500" width="20" height="26.800" fill="#fff"/>
<rect x="1956.800" y="992.900" width="20" height="30" fill="#fef4f4"/>

<!-- tabs -->
<text x="78" y="1046.700" textLength="38" lengthAdjust="spacingAndGlyphs">Tree</text>
<text x="153" y="1046.700" textLength="150" lengthAdjust="spacingAndGlyphs">Transaction Flow</text>
<text x="316.700" y="1046.700" textLength="139.300" lengthAdjust="spacingAndGlyphs">API Distribution</text>
</g>

<!-- highlight box -->
<rect x="1180" y="530" width="478" height="227.500" rx="2" fill="none" stroke="#fb2a0a" stroke-width="8"/>

<!-- footer -->
<rect x="0" y="1088" width="2048" height="52" fill="#444"/>
<rect x="0" y="1140" width="444" height="12" fill="#0099c4"/>
<rect x="444" y="1140" width="1133" height="12" fill="#e76e6a"/>
<rect x="1577" y="1140" width="471" height="12" fill="#7fb040"/>
<text x="95.500" y="1122.700" style="font-size:22px;fill:#eee" textLength="24" lengthAdjust="spacingAndGlyphs">10</text>
</svg>
</body></html>
